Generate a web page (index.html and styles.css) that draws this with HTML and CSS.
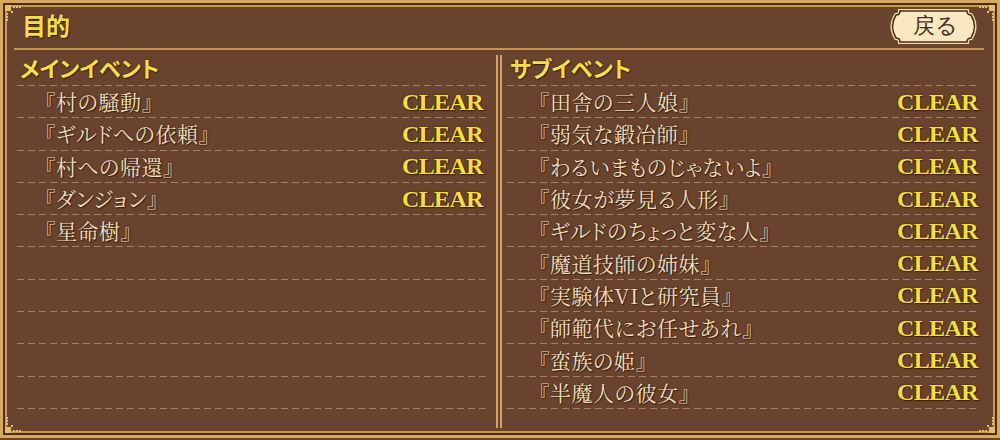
FILE: index.html
```html
<!DOCTYPE html>
<html lang="ja">
<head>
  <meta charset="UTF-8">
  <title>目的</title>
  <link rel="stylesheet" href="styles.css">
</head>
<body>
  <div class="frame">
    <svg class="corner corner-tl" width="16" height="16" viewBox="0 0 16 16"><use href="#orn"/></svg>
    <svg class="corner corner-tr" width="16" height="16" viewBox="0 0 16 16"><use href="#orn"/></svg>
    <svg class="corner corner-bl" width="16" height="16" viewBox="0 0 16 16"><use href="#orn"/></svg>
    <svg class="corner corner-br" width="16" height="16" viewBox="0 0 16 16"><use href="#orn"/></svg>
    <svg width="0" height="0" class="defs">
      <defs>
        <g id="orn" fill="#e6bd6c">
          <rect x="0" y="0" width="6" height="6"/>
          <rect x="6" y="6" width="2" height="2"/>
          <rect x="8" y="1" width="2" height="2"/>
          <rect x="11" y="1" width="2" height="2"/>
          <rect x="14" y="1" width="2" height="2"/>
          <rect x="1" y="8" width="2" height="2"/>
          <rect x="1" y="11" width="2" height="2"/>
          <rect x="1" y="14" width="2" height="2"/>
        </g>
      </defs>
    </svg>

    <div class="header">
      <h1 class="title">目的</h1>
      <button class="back-button">
        <svg class="back-shape" width="93" height="35" viewBox="0 0 93 35">
          <path d="M13 2 H80 Q80 6 84 6 Q91 17.5 84 29 Q80 29 80 33 H13 Q13 29 9 29 Q2 17.5 9 6 Q13 6 13 2 Z" fill="none" stroke="#f3d9a8" stroke-width="4"/>
          <path d="M13 2 H80 Q80 6 84 6 Q91 17.5 84 29 Q80 29 80 33 H13 Q13 29 9 29 Q2 17.5 9 6 Q13 6 13 2 Z" fill="#fce8c0" stroke="#4b2d1a" stroke-width="1.6"/>
        </svg>
        <span class="back-label">戻る</span>
      </button>
    </div>

    <div class="columns">
      <div class="col col-main">
        <h2 class="col-title">メインイベント</h2>
        <ul class="event-list">
          <li class="event"><span class="event-name">『村の騒動』</span><span class="clear">CLEAR</span></li>
          <li class="event"><span class="event-name">『ギルドへの依頼』</span><span class="clear">CLEAR</span></li>
          <li class="event"><span class="event-name">『村への帰還』</span><span class="clear">CLEAR</span></li>
          <li class="event"><span class="event-name">『ダンジョン』</span><span class="clear">CLEAR</span></li>
          <li class="event"><span class="event-name">『星命樹』</span></li>
          <li class="event"></li>
          <li class="event"></li>
          <li class="event"></li>
          <li class="event"></li>
          <li class="event"></li>
        </ul>
      </div>

      <div class="divider"></div>

      <div class="col col-sub">
        <h2 class="col-title">サブイベント</h2>
        <ul class="event-list">
          <li class="event"><span class="event-name">『田舎の三人娘』</span><span class="clear">CLEAR</span></li>
          <li class="event"><span class="event-name">『弱気な鍛冶師』</span><span class="clear">CLEAR</span></li>
          <li class="event"><span class="event-name">『わるいまものじゃないよ』</span><span class="clear">CLEAR</span></li>
          <li class="event"><span class="event-name">『彼女が夢見る人形』</span><span class="clear">CLEAR</span></li>
          <li class="event"><span class="event-name">『ギルドのちょっと変な人』</span><span class="clear">CLEAR</span></li>
          <li class="event"><span class="event-name">『魔道技師の姉妹』</span><span class="clear">CLEAR</span></li>
          <li class="event"><span class="event-name">『実験体VIと研究員』</span><span class="clear">CLEAR</span></li>
          <li class="event"><span class="event-name">『師範代にお任せあれ』</span><span class="clear">CLEAR</span></li>
          <li class="event"><span class="event-name">『蛮族の姫』</span><span class="clear">CLEAR</span></li>
          <li class="event"><span class="event-name">『半魔人の彼女』</span><span class="clear">CLEAR</span></li>
        </ul>
      </div>
    </div>
  </div>
</body>
</html>
```

FILE: styles.css
```css
* {
  box-sizing: border-box;
  margin: 0;
  padding: 0;
}

body {
  width: 1000px;
  height: 440px;
  overflow: hidden;
  background: #6a432e;
  font-family: "Noto Serif CJK JP", "Noto Sans CJK JP", serif;
}

.frame {
  position: relative;
  width: 1000px;
  height: 438px;
  background: #6a432e;
  border: 3px solid #d8a95c;
  box-shadow: inset 0 0 0 2px #4c2e1b, inset 0 0 0 4px #c6974f;
  padding: 4px;
}

/* little pixel ornaments in the frame corners */
.defs {
  position: absolute;
}

.corner {
  position: absolute;
}

.corner-tl { top: 2px; left: 2px; }
.corner-tr { top: 2px; right: 2px; transform: scaleX(-1); }
.corner-bl { bottom: 2px; left: 2px; transform: scaleY(-1); }
.corner-br { bottom: 2px; right: 2px; transform: scale(-1, -1); }

.header {
  display: flex;
  align-items: center;
  justify-content: space-between;
  height: 43px;
  margin: 0 9px 0 7px;
  padding: 0 4px 0 8px;
  border-bottom: 2px solid #c29457;
}

.title {
  font-family: "Noto Sans CJK JP", sans-serif;
  font-size: 24px;
  font-weight: 700;
  color: #f6e04a;
  text-shadow: 0 0 2px #3b2111, 1px 1px 1px #3b2111;
  line-height: 1;
  margin-top: -6px;
}

.back-button {
  position: relative;
  width: 93px;
  height: 35px;
  margin-top: -3px;
  border: none;
  background: none;
  cursor: pointer;
  display: flex;
  align-items: center;
  justify-content: center;
}

.back-shape {
  position: absolute;
  left: 0;
  top: 0;
}

.back-label {
  position: relative;
  font-size: 22px;
  color: #4a2d1b;
  line-height: 1;
  margin-left: 3px;
}

.columns {
  display: grid;
  grid-template-columns: 473px 17px 473px;
  margin-left: 10px;
  height: 380px;
}

.divider {
  justify-self: center;
  width: 6px;
  margin: 5px 0 2px;
  border-left: 2px solid #d2a563;
  border-right: 2px solid #d2a563;
}

.col-title {
  height: 35px;
  padding: 0 0 2px 3px;
  display: flex;
  align-items: center;
  font-family: "Noto Sans CJK JP", sans-serif;
  font-feature-settings: "palt";
  font-size: 22px;
  font-weight: 700;
  color: #f6e04a;
  text-shadow: 0 0 2px #3b2111, 1px 1px 1px #3b2111;
  line-height: 1;
}

.event-list {
  list-style: none;
  padding-bottom: 1px;
  background: linear-gradient(to right, #a2816a 7px, transparent 7px) left bottom / 11px 1px repeat-x;
}

.event {
  height: 32.3px;
  display: flex;
  align-items: center;
  justify-content: space-between;
  padding: 1px 7px 0 28px;
  background: linear-gradient(to right, #a2816a 7px, transparent 7px) left top / 11px 1px repeat-x;
}

.col-sub .event {
  padding-left: 32px;
  padding-right: 2px;
}

.event-name {
  font-size: 21px;
  font-feature-settings: "palt";
  letter-spacing: 0.5px;
  color: #f3e0c2;
  text-shadow: 0 0 2px #3b2111, 1px 1px 1px #3b2111;
  line-height: 1;
}

.clear {
  font-family: "Liberation Serif", serif;
  font-size: 24px;
  font-weight: 700;
  letter-spacing: -0.6px;
  color: #f4df3c;
  text-shadow: 0 0 2px #3b2111, 1px 1px 1px #3b2111;
  line-height: 1;
}
```
